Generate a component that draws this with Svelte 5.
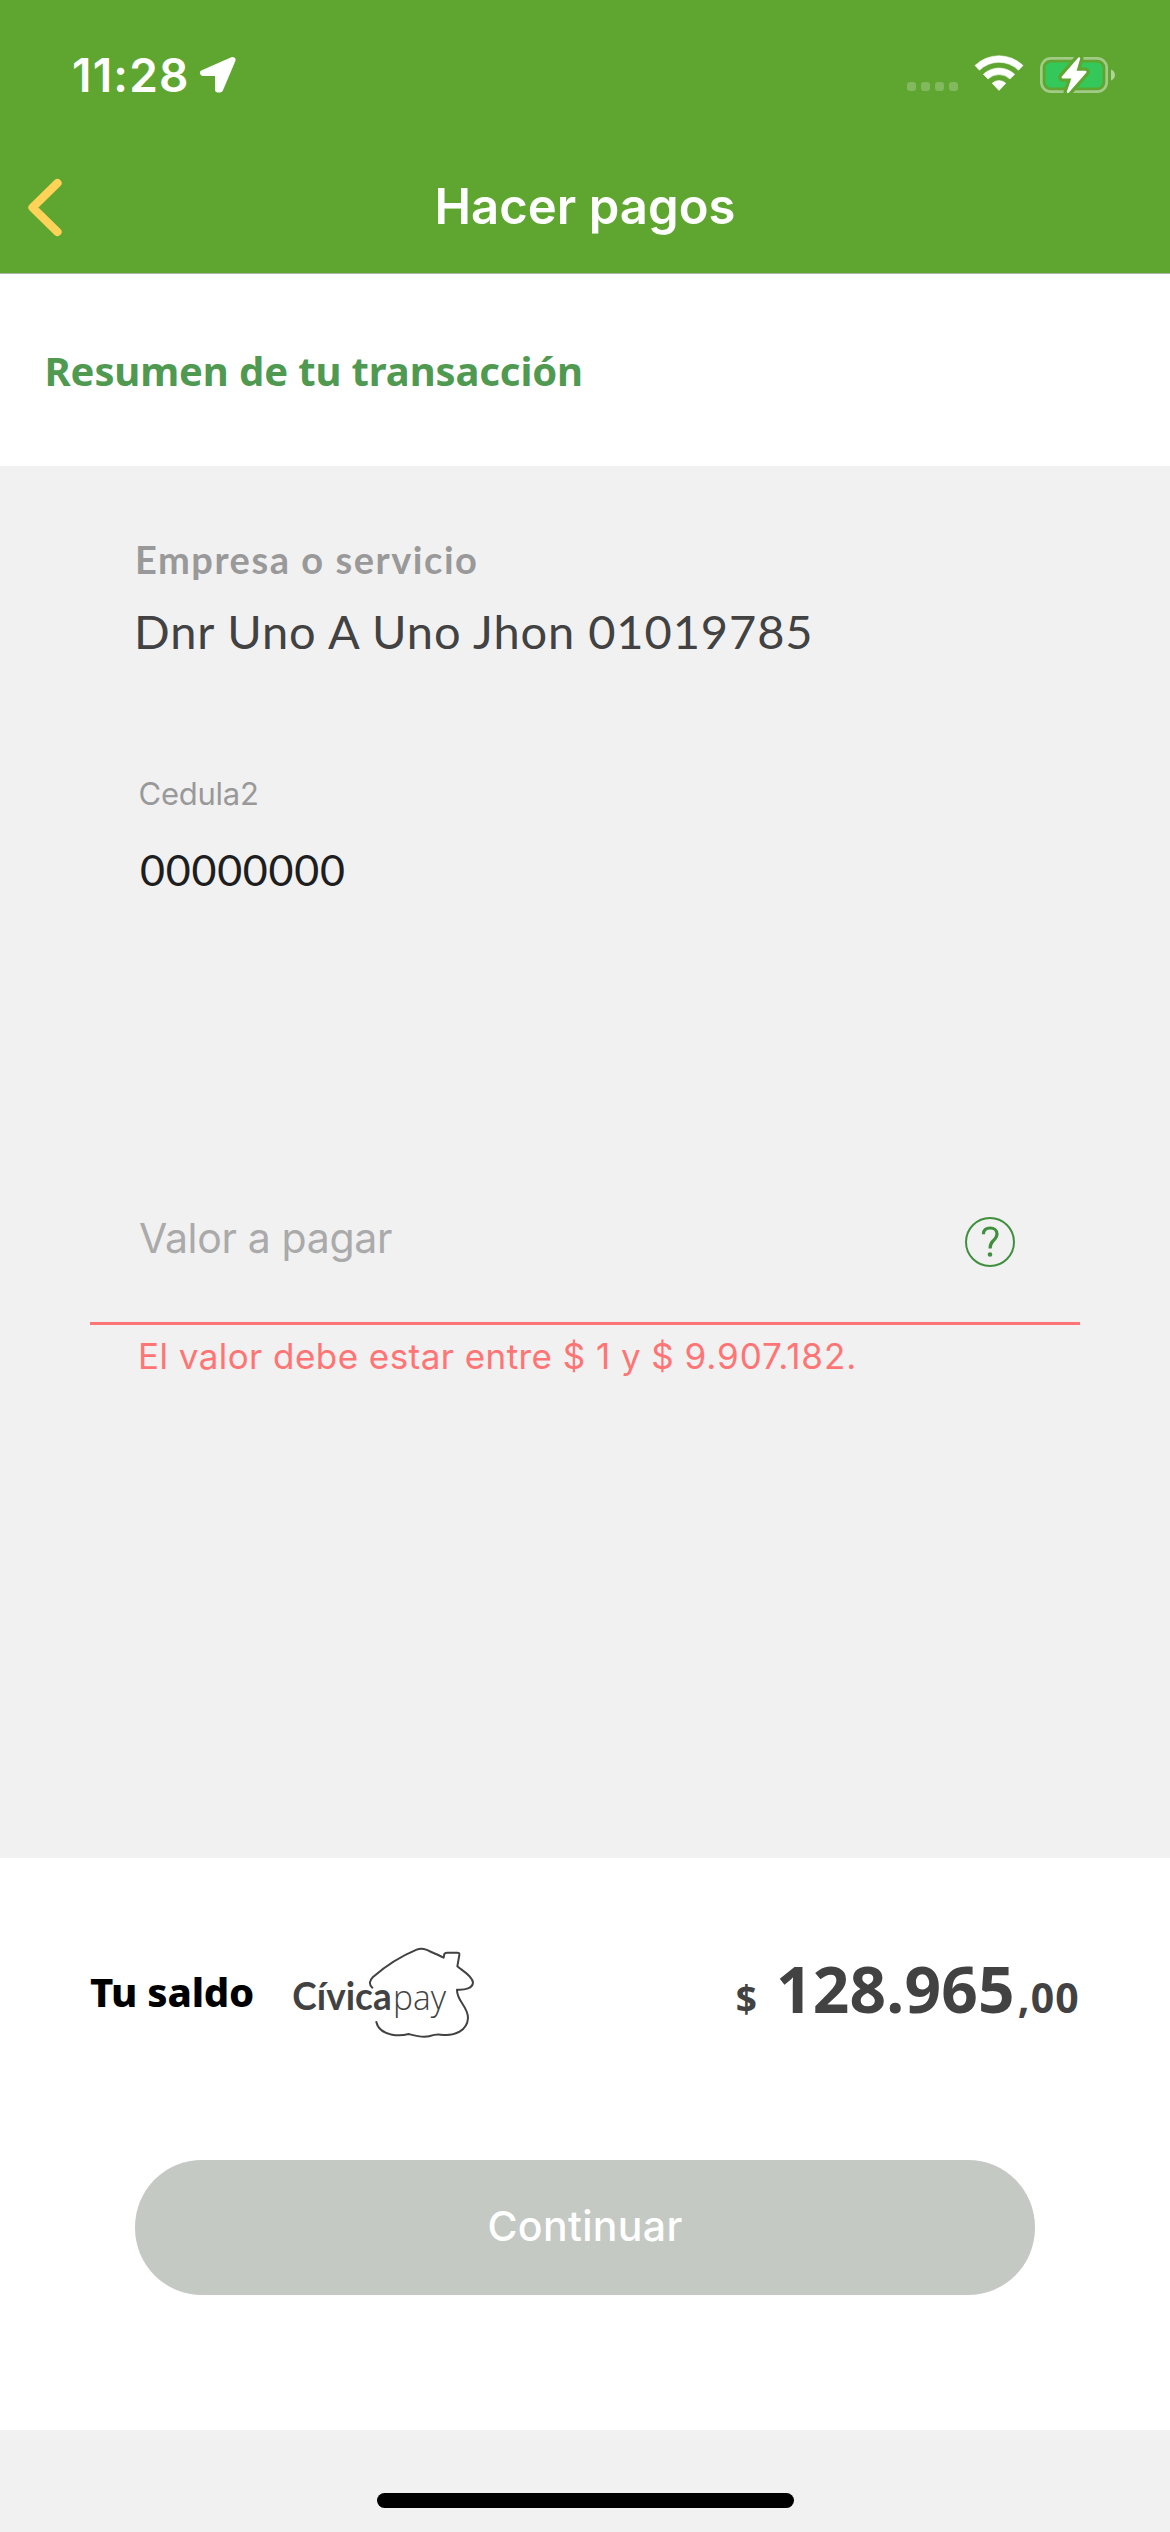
<script>
  const company = { label: 'Empresa o servicio', name: 'Dnr Uno A Uno Jhon 01019785' };
  const document = { label: 'Cedula2', number: '00000000' };
  const balance = { whole: '128.965', cents: ',00' };
</script>

<main class="screen">
  <header class="header">
    <div class="status">
      <div class="status-left">
        <span class="time">11:28</span>
        <svg class="location" width="38" height="38" viewBox="0 0 38 38" aria-hidden="true">
          <path d="M33.5 4 L4 17 L19 17 L19 33.5 L21 33.5 Z" fill="#fff" stroke="#fff" stroke-width="6" stroke-linejoin="round" />
        </svg>
      </div>
      <div class="status-right">
        <div class="signal"><i></i><i></i><i></i><i></i></div>
        <svg class="wifi" width="50" height="38" viewBox="0 0 50 38" aria-hidden="true">
          <path d="M1 11.5 A34.5 34.5 0 0 1 49 11.5 L44.5 16.2 A28 28 0 0 0 5.5 16.2 Z" fill="#fff" stroke="#fff" stroke-width=".6" stroke-linejoin="round" />
          <path d="M9.3 20.3 A22.8 22.8 0 0 1 40.7 20.3 L36 25 A16 16 0 0 0 14 25 Z" fill="#fff" stroke="#fff" stroke-width=".6" stroke-linejoin="round" />
          <path d="M18.2 29.2 A10 10 0 0 1 31.8 29.2 L25 36.4 Z" fill="#fff" stroke="#fff" stroke-width=".6" stroke-linejoin="round" />
        </svg>
        <svg class="battery" width="76" height="40" viewBox="0 0 76 40" aria-hidden="true">
          <rect x="1.3" y="3.3" width="65.4" height="33.4" rx="9.5" fill="none" stroke="#fff" stroke-opacity=".42" stroke-width="2.7" />
          <rect x="5.5" y="7.5" width="57" height="25" rx="5.5" fill="#34c759" />
          <path d="M71 14.5 C76.3 16.5 76.3 23.5 71 25.5 Z" fill="#fff" fill-opacity=".5" />
          <path d="M39 3.5 L22.8 22.3 L33 22.3 L28 36.8 L45.3 17 L35 17 Z" fill="#5fa631" stroke="#5fa631" stroke-width="9" stroke-linejoin="round" />
          <path d="M39 3.5 L22.8 22.3 L33 22.3 L28 36.8 L45.3 17 L35 17 Z" fill="#fff" stroke="#fff" stroke-width="2.4" stroke-linejoin="round" />
        </svg>
      </div>
    </div>
    <nav class="nav">
      <svg class="back" width="37" height="61" viewBox="0 0 37 61" aria-label="Volver">
        <path d="M31.5 6 L6.5 30.5 L31.5 55" fill="none" stroke="#ffd357" stroke-width="8.2" stroke-linecap="round" stroke-linejoin="round" />
      </svg>
      <h1>Hacer pagos</h1>
    </nav>
  </header>

  <section class="summary"><h2>Resumen de tu transacción</h2></section>

  <section class="details">
    <p class="company-label">{company.label}</p>
    <p class="company-name">{company.name}</p>
    <p class="doc-label">{document.label}</p>
    <p class="doc-number">{document.number}</p>
    <div class="field">
      <span class="placeholder">Valor a pagar</span>
      <svg class="help" width="50" height="50" viewBox="0 0 50 50" aria-label="Ayuda">
        <circle cx="25" cy="25" r="24" fill="none" stroke="#3f8f3f" stroke-width="2" />
        <path d="M18.4 17.2 C18.4 12.8 21 11 25.2 11 C29.2 11 32 13.4 32 17 C32 20.2 30.2 21.8 28 24 C26 26 25.1 27.4 25.1 31.6" fill="none" stroke="#3f8f3f" stroke-width="3.2" />
        <circle cx="25" cy="37.5" r="2.3" fill="#3f8f3f" />
      </svg>
    </div>
    <p class="error">El valor debe estar entre $ 1 y $ <span class="limit">9.907.182.</span></p>
  </section>

  <footer class="footer">
    <div class="balance">
      <span class="balance-label">Tu saldo</span>
      <svg class="logo" width="210" height="120" viewBox="0 0 630 360" aria-label="Cívica pay">
        <g fill="none" stroke="#424242" stroke-width="6" stroke-linecap="round" stroke-linejoin="round">
          <path d="M277 173 C266 163 268 152 279 141 C317 108 362 79 410 59 Q424 53 438 59 C456 67 473 74 491 83 L493 72 Q495 68 501 68 L532 68 Q539 68 538 75 L532 109 C545 121 578 137 579 158 C578 174 556 181 531 179 C530 214 564 228 564 264 C562 301 526 320 482 314 C466 312 459 315 447 319 C426 324 404 317 386 312 C371 316 353 317 336 314 C310 309 293 295 289 276" />
        </g>
        <text class="logo-bold" x="37" y="241" textLength="298" lengthAdjust="spacingAndGlyphs">Cívica</text>
        <text class="logo-light" x="339" y="240" textLength="159" lengthAdjust="spacingAndGlyphs">pay</text>
      </svg>
      <div class="amount">
        <span class="currency">$</span><span class="whole">{balance.whole}</span><span class="cents">{balance.cents}</span>
      </div>
    </div>
    <button class="continue" disabled>Continuar</button>
  </footer>

  <div class="home-area"><div class="home-bar"></div></div>
</main>

<style>
  :global(body) { margin: 0; background: #f1f1f1; }
  .screen { width: 1170px; height: 2532px; display: flex; flex-direction: column; overflow: hidden; background: #f1f1f1; font-family: Inter, 'Liberation Sans', sans-serif; }
  h1, h2, p { margin: 0; font-weight: 400; white-space: nowrap; }
  svg { display: block; flex: none; }

  .header { height: 274px; flex: none; box-sizing: border-box; background: #5fa631; border-bottom: 1px solid #adb3a8; color: #fff; }
  .status { height: 149px; display: flex; align-items: center; justify-content: space-between; padding: 0 54px 0 72px; }
  .status-left, .status-right { display: flex; align-items: center; }
  .time { font-size: 46px; line-height: 56px; font-weight: 600; letter-spacing: 1.2px; }
  .location { margin-left: 9px; }
  .signal { display: flex; gap: 5px; margin: 24px 16px 0 0; }
  .signal i { width: 9px; height: 9px; border-radius: 3px; background: rgba(255, 255, 255, .22); }
  .wifi { margin: -3px 16px 0 0; }
  .nav { height: 116px; display: grid; grid-template-columns: 100px 1fr 100px; align-items: center; }
  .back { margin-left: 26px; }
  h1 { text-align: center; font-size: 49px; line-height: 60px; font-weight: 600; letter-spacing: .03px; }

  .summary { height: 192px; flex: none; box-sizing: border-box; display: flex; align-items: center; background: #fff; padding: 2px 0 0 44.5px; }
  h2 { font: 700 40px/56px 'Noto Sans', sans-serif; letter-spacing: -.12px; color: #4f9a50; }

  .details { height: 1392px; flex: none; box-sizing: border-box; padding: 69px 90px 0; }
  .company-label { padding-left: 45px; font: 700 38px/48px Lato, sans-serif; letter-spacing: 1.54px; color: #999; }
  .company-name { margin-top: 18px; padding-left: 44px; font: 400 47px/60px Lato, sans-serif; letter-spacing: .9px; color: #424242; }
  .doc-label { margin-top: 113px; padding-left: 48.5px; font-size: 31px; line-height: 40px; letter-spacing: -.24px; color: #999; }
  .doc-number { margin-top: 31px; padding-left: 50px; font: 400 43px/50px Lato, sans-serif; letter-spacing: .77px; color: #1e1e1e; }
  .field { margin-top: 322px; height: 105px; display: flex; justify-content: space-between; align-items: flex-start; padding: 0 65px 0 49px; border-bottom: 3px solid #ff7474; }
  .placeholder { font-size: 41px; line-height: 42px; letter-spacing: -.33px; color: #aaa; }
  .error { margin-top: 9px; padding-left: 48px; font-size: 35px; line-height: 45px; letter-spacing: .45px; color: #ff7474; }
  .limit { letter-spacing: .9px; }

  .footer { height: 572px; flex: none; box-sizing: border-box; padding: 72px 90px 0; background: #fff; }
  .balance { height: 120px; display: flex; align-items: center; font-family: 'Noto Sans', sans-serif; color: #424242; }
  .balance-label { width: 190px; flex: none; padding-top: 3px; font-size: 40px; line-height: 56px; font-weight: 800; letter-spacing: -.25px; color: #000; white-space: nowrap; }
  .amount { margin-left: auto; padding-top: 8px; display: flex; align-items: baseline; line-height: 80px; font-weight: 700; }
  .currency { font-size: 37px; margin-right: 19px; }
  .whole { font-size: 64px; letter-spacing: .16px; }
  .cents { font-size: 41px; margin-left: 3px; letter-spacing: 1.2px; }
  .logo-bold { font: 700 117px Lato, sans-serif; fill: #424242; }
  .logo-light { font: 300 107px 'Open Sans', sans-serif; fill: #424242; }
  .continue { display: block; width: 900px; height: 135px; margin: 110px auto 0; padding: 0 0 3px; border: 0; border-radius: 67px; background: #c5c9c3; color: #fff; font: 500 41px/50px Inter, sans-serif; letter-spacing: .33px; }

  .home-area { flex: 1; display: flex; justify-content: center; align-items: flex-start; padding-top: 63px; }
  .home-bar { width: 417px; height: 15px; border-radius: 8px; background: #000; }
</style>
